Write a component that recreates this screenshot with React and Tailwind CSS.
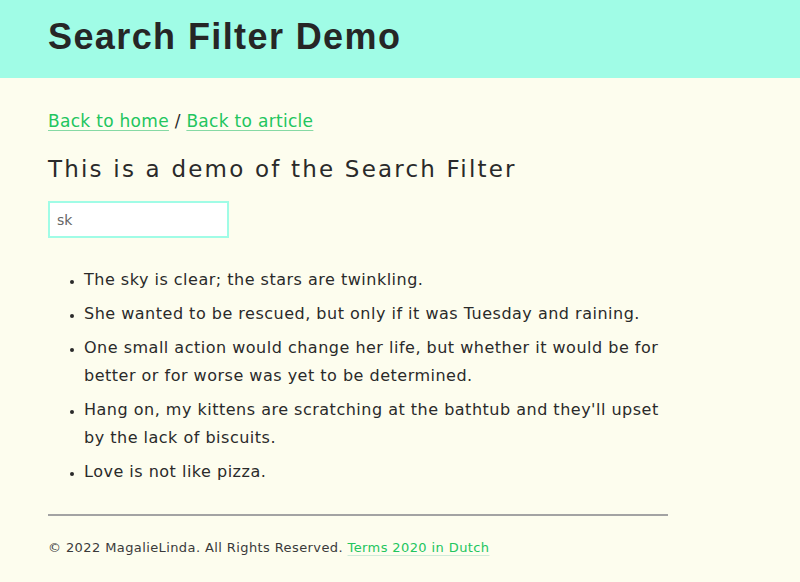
export default function App() {
  const items = [
    "The sky is clear; the stars are twinkling.",
    "She wanted to be rescued, but only if it was Tuesday and raining.",
    "One small action would change her life, but whether it would be for better or for worse was yet to be determined.",
    "Hang on, my kittens are scratching at the bathtub and they'll upset by the lack of biscuits.",
    "Love is not like pizza.",
  ];
  return (
    <div className="min-h-[582px] bg-[#fdfdee] text-[#2a2a2a]">
      <header className="h-[78px] bg-[#a0fce6] flex items-center px-[48px]">
        <h1 className="font-['Liberation_Sans',sans-serif] font-bold text-[36px] tracking-[1.4px] leading-none text-[#262626] mt-[-4px]">
          Search Filter Demo
        </h1>
      </header>
      <main className="px-[48px] w-[716px] font-['DejaVu_Sans',sans-serif]">
        <nav className="mt-[31px] text-[17px] tracking-[0.3px] leading-[24px] text-[#2a2a2a]">
          <a href="#" className="text-[#22c55e] underline decoration-[#86d9a4] underline-offset-[3px]">Back to home</a>
          {" / "}
          <a href="#" className="text-[#22c55e] underline decoration-[#86d9a4] underline-offset-[3px]">Back to article</a>
        </nav>
        <h2 className="mt-[21px] text-[23px] tracking-[2.2px] leading-[30px] text-[#2a2a2a]">
          This is a demo of the Search Filter
        </h2>
        <input
          className="mt-[17px] block w-[181px] h-[37px] border-2 border-[#a0fce6] bg-white px-[7px] text-[14px] text-[#666] outline-none font-['DejaVu_Sans',sans-serif]"
          defaultValue="sk"
        />
        <ul className="mt-[28px] list-disc pl-[36px] text-[16px] tracking-[0.5px] leading-[28px] text-[#2a2a2a] flex flex-col gap-[6px]">
          {items.map((t) => (
            <li key={t} className="marker:text-[12px]">{t}</li>
          ))}
        </ul>
        <hr className="mt-[28px] border-t-2 border-[#a3a3a3] w-[620px]" />
        <footer className="mt-[22px] text-[13px] tracking-[0.4px] leading-[20px] text-[#3a3a3a]">
          © 2022 MagalieLinda. All Rights Reserved.{" "}
          <a href="#" className="text-[#22c55e] underline decoration-[#cfead8] underline-offset-[3px]">Terms 2020 in Dutch</a>
        </footer>
      </main>
    </div>
  );
}
